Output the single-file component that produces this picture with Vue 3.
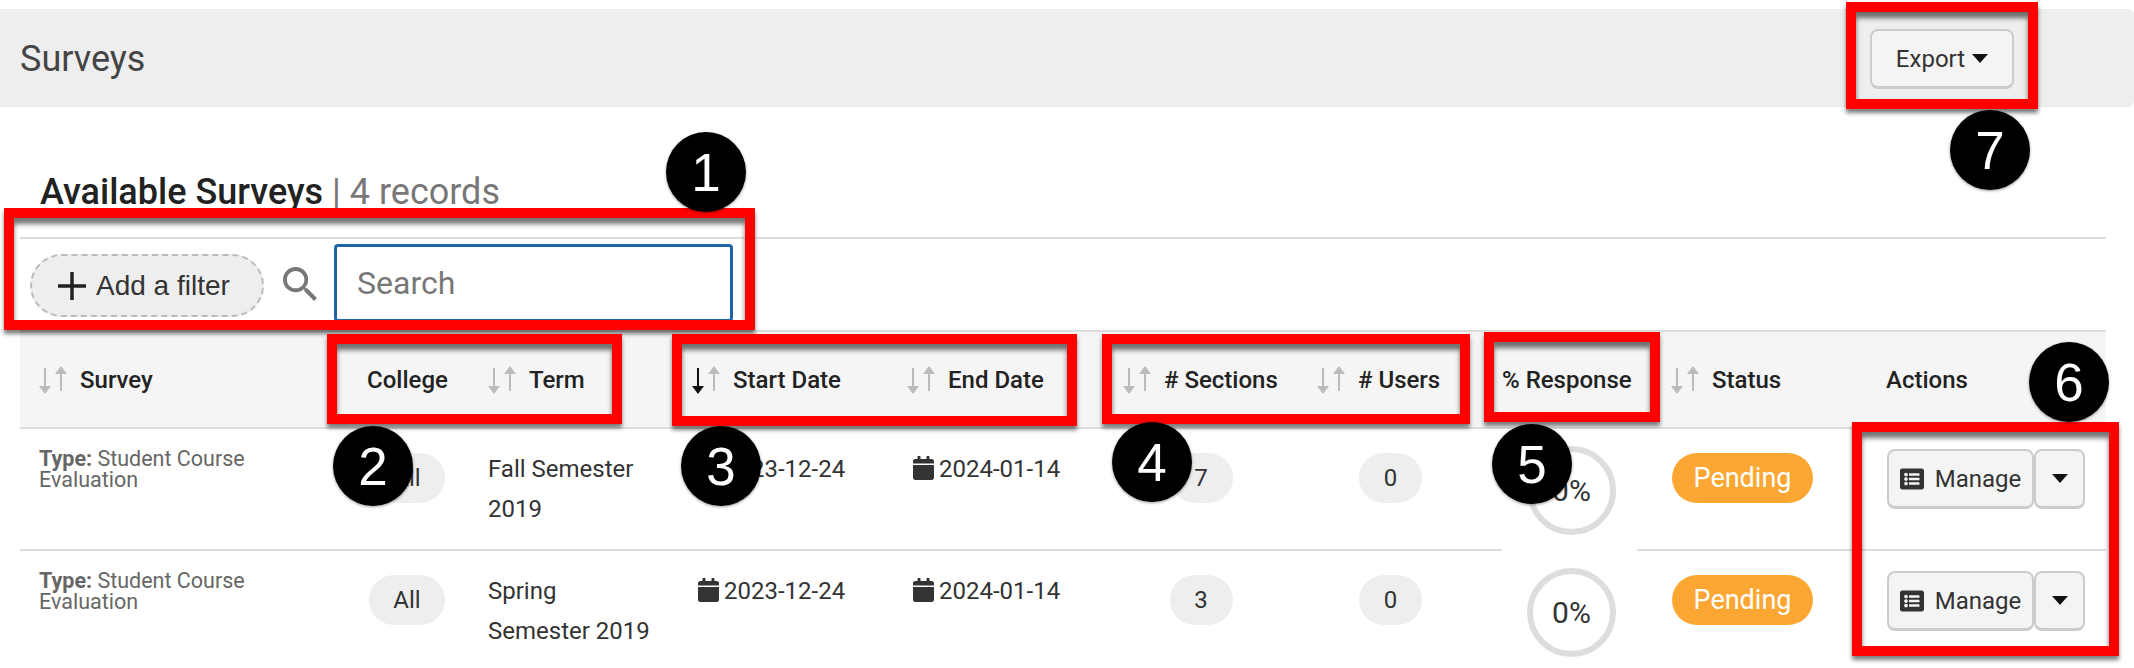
<script setup>
const columns = [
  { label: 'Survey', sort: true },
  { label: 'College' },
  { label: 'Term', sort: true },
  { label: 'Start Date', sort: true, active: true },
  { label: 'End Date', sort: true },
  { label: '# Sections', sort: true },
  { label: '# Users', sort: true },
  { label: '% Response' },
  { label: 'Status', sort: true },
  { label: 'Actions' }
]

const rows = [
  { term: 'Fall Semester 2019', sections: 7 },
  { term: 'Spring Semester 2019', sections: 3 }
]

// callout boxes and numbered markers drawn over the screenshot
const boxes = [
  { x: 4, y: 208, w: 751, h: 122 },
  { x: 327, y: 334, w: 295, h: 90 },
  { x: 672, y: 334, w: 405, h: 92 },
  { x: 1102, y: 334, w: 368, h: 90 },
  { x: 1484, y: 332, w: 176, h: 90 },
  { x: 1852, y: 422, w: 267, h: 234 },
  { x: 1846, y: 2, w: 192, h: 107 }
]

const markers = [
  { n: 1, x: 706, y: 172 },
  { n: 2, x: 373, y: 466 },
  { n: 3, x: 721, y: 466 },
  { n: 4, x: 1152, y: 462 },
  { n: 5, x: 1532, y: 464 },
  { n: 6, x: 2069, y: 382 },
  { n: 7, x: 1990, y: 150 }
]

const boxStyle = (b) => ({ left: b.x + 'px', top: b.y + 'px', width: b.w + 'px', height: b.h + 'px' })
const markerStyle = (m) => ({ left: m.x - 40 + 'px', top: m.y - 40 + 'px' })
</script>

<template>
  <div class="page">
    <header class="topbar">
      <h1 class="page-title">Surveys</h1>
      <button class="export-btn">Export <span class="caret"></span></button>
    </header>

    <h2 class="list-title">Available Surveys <span class="count">| 4 records</span></h2>

    <div class="toolbar">
      <button class="filter-btn">
        <svg class="plus" viewBox="0 0 28 28"><path d="M14 0v28M0 14h28" /></svg>
        Add a filter
      </button>
      <svg class="search-icon" viewBox="3 3 17.5 17.5">
        <path d="M15.5 14h-.79l-.28-.27A6.471 6.471 0 0 0 16 9.5 6.5 6.5 0 1 0 9.5 16c1.61 0 3.09-.59 4.23-1.57l.27.28v.79l5 4.99L20.49 19l-4.99-5zm-6 0C7.01 14 5 11.99 5 9.5S7.01 5 9.5 5 14 7.01 14 9.5 11.99 14 9.5 14z" />
      </svg>
      <input class="search" type="text" placeholder="Search" />
    </div>

    <div class="table">
      <div class="row head">
        <div v-for="col in columns" :key="col.label" class="th">
          <svg v-if="col.sort" class="sort" viewBox="0 0 28 28">
            <path class="arrow" :class="{ on: col.active }" d="M5 2h2v18h5l-6 8-6-8h5z" />
            <path class="arrow" d="M21 25h2V8h5l-6-8-6 8h5z" />
          </svg>
          <span>{{ col.label }}</span>
        </div>
      </div>

      <div v-for="row in rows" :key="row.term" class="row body">
        <div class="td survey"><b>Type:</b> Student Course Evaluation</div>
        <div class="td center college"><span class="pill">All</span></div>
        <div class="td term">{{ row.term }}</div>
        <div class="td date">
          <svg class="cal" viewBox="0 0 448 512">
            <path d="M12 192h424c6.600 0 12 5.400 12 12v260c0 26.500-21.500 48-48 48H48c-26.500 0-48-21.500-48-48V204c0-6.600 5.400-12 12-12zm436-44v-36c0-26.500-21.500-48-48-48h-48V12c0-6.600-5.400-12-12-12h-40c-6.600 0-12 5.400-12 12v52H160V12c0-6.600-5.400-12-12-12h-40c-6.600 0-12 5.400-12 12v52H48C21.500 64 0 85.500 0 112v36c0 6.600 5.400 12 12 12h424c6.600 0 12-5.400 12-12z" />
          </svg>
          2023-12-24
        </div>
        <div class="td date">
          <svg class="cal" viewBox="0 0 448 512">
            <path d="M12 192h424c6.600 0 12 5.400 12 12v260c0 26.500-21.500 48-48 48H48c-26.500 0-48-21.500-48-48V204c0-6.600 5.400-12 12-12zm436-44v-36c0-26.500-21.500-48-48-48h-48V12c0-6.600-5.400-12-12-12h-40c-6.600 0-12 5.400-12 12v52H160V12c0-6.600-5.400-12-12-12h-40c-6.600 0-12 5.400-12 12v52H48C21.500 64 0 85.500 0 112v36c0 6.600 5.400 12 12 12h424c6.600 0 12-5.400 12-12z" />
          </svg>
          2024-01-14
        </div>
        <div class="td center"><span class="pill num">{{ row.sections }}</span></div>
        <div class="td center"><span class="pill num">0</span></div>
        <div class="td response"><span class="ring">0%</span></div>
        <div class="td status"><span class="pending">Pending</span></div>
        <div class="td actions">
          <button class="manage">
            <svg class="list-icon" viewBox="0 0 512 512">
              <path d="M464 480H48c-26.510 0-48-21.490-48-48V80c0-26.510 21.490-48 48-48h416c26.510 0 48 21.490 48 48v352c0 26.510-21.490 48-48 48zM128 120c-22.091 0-40 17.909-40 40s17.909 40 40 40 40-17.909 40-40-17.909-40-40-40zm0 96c-22.091 0-40 17.909-40 40s17.909 40 40 40 40-17.909 40-40-17.909-40-40-40zm0 96c-22.091 0-40 17.909-40 40s17.909 40 40 40 40-17.909 40-40-17.909-40-40-40zm288-136v-32c0-6.627-5.373-12-12-12H204c-6.627 0-12 5.373-12 12v32c0 6.627 5.373 12 12 12h200c6.627 0 12-5.373 12-12zm0 96v-32c0-6.627-5.373-12-12-12H204c-6.627 0-12 5.373-12 12v32c0 6.627 5.373 12 12 12h200c6.627 0 12-5.373 12-12zm0 96v-32c0-6.627-5.373-12-12-12H204c-6.627 0-12 5.373-12 12v32c0 6.627 5.373 12 12 12h200c6.627 0 12-5.373 12-12z" />
            </svg>
            Manage
          </button>
          <button class="more"><span class="caret"></span></button>
        </div>
      </div>
    </div>

    <div v-for="(b, i) in boxes" :key="i" class="callout" :style="boxStyle(b)"></div>
    <div v-for="m in markers" :key="m.n" class="marker" :style="markerStyle(m)">{{ m.n }}</div>
  </div>
</template>

<style>
html,
body {
  margin: 0;
  background: #fff;
  overflow: hidden;
}
</style>

<style scoped>
.page {
  position: relative;
  width: 2134px;
  height: 668px;
  overflow: hidden;
  padding-top: 9px;
  box-sizing: border-box;
  font-family: Roboto, "Liberation Sans", sans-serif;
  color: #333;
}

button {
  font-family: inherit;
  color: #333;
  cursor: pointer;
}

.topbar {
  display: flex;
  align-items: center;
  justify-content: space-between;
  height: 98px;
  padding: 0 120px 0 20px;
  background: #eee;
  border-radius: 0 6px 6px 0;
}

.page-title {
  margin: 2px 0 0;
  font-size: 36px;
  font-weight: 400;
  color: #444;
}

.export-btn {
  display: flex;
  align-items: center;
  gap: 7px;
  width: 144px;
  height: 60px;
  margin-top: 1px;
  padding-top: 2px;
  justify-content: center;
  background: #f4f4f4;
  border: 2px solid #ccc;
  border-bottom-width: 3px;
  border-radius: 8px;
  font-size: 24px;
}

.caret {
  display: inline-block;
  border-left: 8px solid transparent;
  border-right: 8px solid transparent;
  border-top: 9px solid #111;
}

.list-title {
  margin: 65px 0 0 40px;
  height: 40px;
  line-height: 40px;
  font-size: 36px;
  font-weight: 500;
  color: #222;
}

.count {
  font-weight: 400;
  color: #777;
}

.toolbar {
  display: flex;
  align-items: center;
  margin: 25px 28px 0 20px;
  height: 91px;
  padding-left: 10px;
  border-top: 2px solid #ddd;
  box-sizing: border-box;
}

.filter-btn {
  display: flex;
  align-items: center;
  gap: 10px;
  width: 234px;
  height: 63px;
  margin-top: 4px;
  padding: 0 0 0 26px;
  background: #eee;
  border: 2px dashed #bbb;
  border-radius: 32px;
  font-family: "Liberation Sans", sans-serif;
  font-size: 28px;
  box-sizing: border-box;
}

.plus {
  width: 28px;
  height: 28px;
  flex: none;
}

.plus path {
  stroke: #222;
  stroke-width: 3.500;
  fill: none;
}

.search-icon {
  width: 34px;
  height: 34px;
  margin: 0 17px 0 19px;
  fill: #777;
}

.search {
  width: 399px;
  height: 78px;
  margin-top: -1px;
  padding: 0 20px;
  box-sizing: border-box;
  border: 3px solid #1f66a8;
  border-radius: 4px;
  outline: none;
  font-family: inherit;
  font-size: 32px;
}

.search::placeholder {
  color: #777;
}

.table {
  margin: 2px 28px 0 20px;
}

.row {
  display: grid;
  grid-template-columns: 328px 121px 204px 215px 216px 194px 185px 169px 215px 239px;
}

.head {
  height: 99px;
  background: #f5f5f5;
  border-top: 2px solid #ddd;
  border-bottom: 2px solid #ddd;
  box-sizing: border-box;
}

.th {
  display: flex;
  align-items: center;
  gap: 13px;
  padding-left: 19px;
  font-size: 24px;
  font-weight: 500;
  color: #222;
}

.sort {
  width: 28px;
  height: 28px;
  flex: none;
}

.arrow {
  fill: #bbb;
}

.arrow.on {
  fill: #111;
}

.body {
  height: 122px;
  border-bottom: 2px solid #ddd;
  box-sizing: border-box;
}

.td {
  font-size: 24px;
  color: #333;
}

.survey {
  padding: 19px 40px 0 19px;
  font-size: 21.500px;
  line-height: 21px;
  color: #666;
}

.center {
  display: flex;
  justify-content: center;
  padding-top: 24px;
}

.college {
  padding-right: 3px;
}

.pill {
  display: flex;
  align-items: center;
  justify-content: center;
  width: 76px;
  height: 50px;
  background: #eee;
  border-radius: 25px;
}

.pill.num {
  width: 63px;
}

.term {
  padding: 20px 19px 0 19px;
  line-height: 40px;
}

.date {
  display: flex;
  align-items: flex-start;
  gap: 5px;
  padding: 20px 0 0 25px;
  line-height: 40px;
}

.cal {
  width: 21px;
  height: 24px;
  margin-top: 7px;
  fill: #333;
}

.response {
  position: relative;
  padding: 17px 0 0 44px;
}

/* ring covers the divider under the first row */
.response::after {
  content: "";
  position: absolute;
  left: 19px;
  bottom: -2px;
  width: 135px;
  height: 2px;
  background: #fff;
}

.ring {
  display: flex;
  align-items: center;
  justify-content: center;
  width: 89px;
  height: 89px;
  box-sizing: border-box;
  border: 6px solid #ddd;
  border-radius: 50%;
  font-size: 30px;
  background: #fff;
}

.status {
  padding: 24px 0 0 20px;
}

.pending {
  display: flex;
  align-items: center;
  justify-content: center;
  width: 141px;
  height: 50px;
  background: #fca733;
  border-radius: 25px;
  color: #fff;
  font-size: 27px;
}

.actions {
  display: flex;
  align-items: flex-start;
  padding: 20px 0 0 20px;
}

.manage,
.more {
  display: flex;
  align-items: center;
  justify-content: center;
  height: 60px;
  padding: 0;
  background: #f4f4f4;
  border: 2px solid #ccc;
  border-bottom-width: 3px;
  border-radius: 8px;
  font-size: 24px;
}

.manage {
  gap: 11px;
  width: 147px;
}

.more {
  width: 51px;
}

.list-icon {
  width: 24px;
  height: 24px;
  fill: #333;
}

/* annotation layer */
.callout {
  position: absolute;
  box-sizing: border-box;
  border: 10px solid #f00;
  box-shadow: 0 4px 4px rgba(0, 0, 0, 0.5), inset 0 6px 5px rgba(0, 0, 0, 0.55);
}

.marker {
  position: absolute;
  display: flex;
  align-items: center;
  justify-content: center;
  width: 80px;
  height: 80px;
  background: #000;
  border-radius: 50%;
  box-shadow: 0 1px 3px rgba(0, 0, 0, 0.4);
  color: #fff;
  font-family: "Liberation Sans", sans-serif;
  font-size: 53px;
}
</style>
